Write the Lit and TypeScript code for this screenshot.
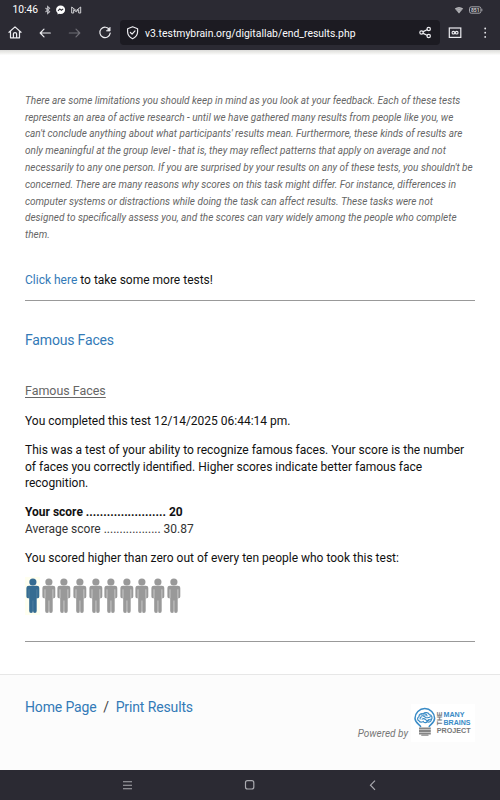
import { LitElement, html, svg, css } from "lit";
import { customElement } from "lit/decorators.js";

const NOTE = [
  "There are some limitations you should keep in mind as you look at your feedback. Each of these tests",
  "represents an area of active research - until we have gathered many results from people like you, we",
  "can't conclude anything about what participants' results mean. Furthermore, these kinds of results are",
  "only meaningful at the group level - that is, they may reflect patterns that apply on average and not",
  "necessarily to any one person. If you are surprised by your results on any of these tests, you shouldn't be",
  "concerned. There are many reasons why scores on this task might differ. For instance, differences in",
  "computer systems or distractions while doing the task can affect results. These tasks were not",
  "designed to specifically assess you, and the scores can vary widely among the people who complete",
  "them.",
];

@customElement("status-bar")
export class StatusBar extends LitElement {
  static styles = css`
    :host { display: flex; align-items: center; height: 20px; padding: 0 17px 0 12.5px; color: #fff; }
    .time { font-size: 10.3px; line-height: 20px; width: 32px; }
    svg { display: block; fill: none; }
    .spacer { flex: 1; }
    .cell { font: bold 5px/6px Roboto, sans-serif; }
  `;
  render() {
    return html`
      <span class="time">10:46</span>
      <svg width="38" height="10" viewBox="0 0 38 10">
        <path d="M.5 3 4.600 6.700 2.600 8.500v-7L4.600 3.300.5 7" stroke="#b9b9bf" stroke-width="1.1" />
        <path d="M15.600.6c-2.600 0-4.500 1.800-4.500 4.200 0 1.300.6 2.400 1.500 3.100v1.500l1.300-.7 1.700.3c2.600 0 4.500-1.800 4.500-4.200S18.200.6 15.600.6z" fill="#fff" />
        <path d="m13 5.900 1.800-2 1.600 1.300 1.800-1.300" stroke="#2b2a33" stroke-width="1.100" />
        <path d="M26.700 8V2L31.200 5.500 35.700 2V8h-2V4.700L31.200 6.800 28.700 4.700V8z" stroke="#d0d0d4" stroke-width="1" />
      </svg>
      <span class="spacer"></span>
      <svg width="10" height="8" viewBox="0 0 10 8">
        <path d="M.8 2.600Q5-.8 9.200 2.600L5 7.400z" fill="#b4b4b8" />
        <path d="M1.800 3.700Q5 1.200 8.200 3.700M3 5.200Q5 3.700 7 5.200" stroke="#77767e" stroke-width=".4" />
      </svg>
      <svg width="19" height="8" viewBox="0 0 19 8">
        <rect x="5.500" y=".8" width="11.400" height="6.400" rx="1.800" stroke="#b0b0b5" stroke-width=".9" />
        <path d="M17.900 2.800v2.400" stroke="#b0b0b5" stroke-width=".8" />
        <text class="cell" x="6.900" y="5.900" fill="#c4c4c8" textLength="8.600">851</text>
      </svg>
    `;
  }
}

@customElement("browser-bar")
export class BrowserBar extends LitElement {
  static styles = css`
    :host { display: flex; height: 30px; color: #fbfbfe; }
    svg { display: block; fill: none; stroke: #ececf0; stroke-width: 1.2; stroke-linecap: round; stroke-linejoin: round; }
    .nav { width: 120px; flex: none; }
    .field { flex: 1; display: flex; height: 25px; background: #1c1b22; border-radius: 4px; }
    .url { font-size: 10.4px; line-height: 27px; flex: 1; white-space: nowrap; }
    .tools { width: 60px; flex: none; }
    .dim { stroke: #6f6e76; }
    .dot { fill: #ececf0; stroke: none; }
  `;
  render() {
    return html`
      <svg class="nav" width="120" height="30" viewBox="0 20 120 30">
        <path d="M9 32.300 15 26.900 21 32.300M10.500 31.200V37.800H19.500V31.200M13.400 37.500V33.800Q13.400 32.700 15 32.700T16.600 33.800V37.500" />
        <path d="M50.300 33H40.300M44 29.200 40.200 33 44 36.800" />
        <path class="dim" d="M69.300 33H79.800M76 29.200 79.800 33 76 36.800" />
        <path d="M109.500 29.700A5.200 5.200 0 1 0 110.200 33.200" />
        <path d="M110.100 27.600V31H106.700z" fill="#ececf0" stroke-width=".7" />
      </svg>
      <div class="field">
        <svg width="25" height="25" viewBox="120 20 25 25">
          <path d="M132.600 26.800 137.600 28.700V31.800C137.600 35 135.400 37.400 132.600 38.700 129.800 37.400 127.600 35 127.600 31.800V28.700zM130.400 32.500 132.100 34.200 135 30.900" />
        </svg>
        <span class="url">v3.testmybrain.org/digitallab/end_results.php</span>
        <svg width="25" height="25" viewBox="415 20 25 25">
          <circle cx="421.500" cy="32.500" r="1.700" /><circle cx="428.700" cy="29" r="1.700" /><circle cx="428.700" cy="36" r="1.700" />
          <path d="M423.200 31.600 427 29.700M423.200 33.400 427 35.300" />
        </svg>
      </div>
      <svg class="tools" width="60" height="30" viewBox="440 20 60 30">
        <rect x="449.300" y="28" width="11.500" height="9.400" stroke-linejoin="miter" />
        <circle cx="453.400" cy="32.700" r="1.350" stroke-width="1.1" /><circle cx="456.700" cy="32.700" r="1.350" stroke-width="1.1" />
        <circle class="dot" cx="485.200" cy="28.500" r=".9" /><circle class="dot" cx="485.200" cy="32.700" r=".9" /><circle class="dot" cx="485.200" cy="36.900" r=".9" />
      </svg>
    `;
  }
}

@customElement("people-row")
export class PeopleRow extends LitElement {
  static styles = css`
    :host { display: flex; height: 38px; }
    .person { width: 15.65px; height: 38px; flex: none; display: block; fill: #999; }
    .active { fill: #356c91; background: linear-gradient(to right, #fffff0 15.5px, transparent 15.5px); }
    .split { stroke: #ddd; stroke-width: 0.7; }
    .active .split { stroke: #7ba0b4; stroke-width: 0.4; }
  `;
  render() {
    return Array.from({ length: 10 }, (_, i) => html`
      <svg class="person ${i === 0 ? "active" : ""}" viewBox="0 0 15.65 38">
        <circle cx="7.900" cy="5" r="3.600" />
        <path d="M4 8.800H11.800Q14.300 8.800 14.300 11.300V19.500Q14.300 21.200 12.900 21.200H11.700V34Q11.700 36 9.900 36 8 36 8 34 8 36 6.100 36 4.200 36 4.200 34V21.200H2.900Q1.400 21.200 1.400 19.500V11.300Q1.400 8.800 4 8.800z" />
        <path class="split" d="M4 12.300V21M11.900 12.300V21M7.950 23.500V35.500" />
      </svg>
    `);
  }
}

@customElement("brains-logo")
export class BrainsLogo extends LitElement {
  static styles = css`
    :host { display: block; width: 64px; height: 38px; background: #fff; }
    svg { display: block; fill: none; stroke-linecap: round; stroke-linejoin: round; }
    text { font: bold 7.8px "Liberation Sans", sans-serif; }
    .blue { stroke: #398bc6; }
    .grey { stroke: #858585; }
    .tblue { fill: #398bc6; }
    .tgrey { fill: #777; }
    .the { font-size: 6.6px; }
  `;
  render() {
    return html`<svg width="64" height="38" viewBox="0 0 64 38">
      <path class="blue" stroke-width="1.500" d="M9.600 22.500C8.900 20.700 4 19 4 14.200A9.800 9.600 0 0 1 23.600 14.200C23.600 19 18.900 20.700 18.200 22.500" />
      <path class="blue" stroke-width="1.200" d="M8 16.800C6 16 6.300 13.300 7.900 12.700 7.900 10.200 10.400 8.900 12.200 9.800 14 7.800 17.600 8.500 18.400 10.700 20.900 11.100 21.700 13.700 20.400 15.600 20.100 17.600 18 18.700 16.300 17.700 15.200 19.200 12.800 19 12.300 17.400 10.900 18.200 8.900 18.100 8 16.800z" />
      <path class="blue" stroke-width="1.100" d="M9.200 15Q8.700 12.900 11 12.700M10 10.900Q12.100 10.600 12.700 12.400M12.600 10Q15.600 9.400 16 11.900M14 11.500Q13 14.100 16.300 13.700T19.300 12.500M11.100 15.100Q12.800 13.900 14.500 15.700T17.700 15.600M16 17.400 19.400 15.200" />
      <path class="grey" stroke-width="2" stroke-linecap="butt" d="M8 24.400H19.800M8 27H19.800M8 29.600H19.800" />
      <path class="grey" stroke-width="1.200" d="M10.800 31.200H17" />
      ${svg`<text class="tgrey the" transform="translate(30.900 21.200) rotate(-90)" textLength="13.600" lengthAdjust="spacingAndGlyphs">THE</text>`}
      <text class="tblue" x="32.500" y="12.600" textLength="21" lengthAdjust="spacingAndGlyphs">MANY</text>
      <text class="tblue" x="32.500" y="20.800" textLength="27" lengthAdjust="spacingAndGlyphs">BRAINS</text>
      <text class="tgrey" x="25.700" y="29" textLength="34" lengthAdjust="spacingAndGlyphs">PROJECT</text>
    </svg>`;
  }
}

@customElement("app-root")
export class AppRoot extends LitElement {
  static styles = css`
    :host { display: flex; flex-direction: column; width: 500px; height: 800px; overflow: hidden; background: #fff; color: #111; font-family: Roboto, sans-serif; }
    .chrome { background: #2b2a33; flex: none; }
    .edge { height: 5px; flex: none; background: linear-gradient(#dcdcda, #f0f0ed 60%, #fdfdfd); }
    main { box-sizing: border-box; padding: 37.800px 25px 0; height: 619px; flex: none; font-size: 12px; line-height: 16.800px; }
    p { margin: 0; white-space: nowrap; }
    a { color: #337ab7; }
    .note { font-size: 10px; font-style: italic; color: #666; }
    .more { margin-top: 28.300px; }
    hr { margin: 11.300px 0 0; border: 0; height: 1px; background: #999; }
    .title { margin: 28.700px 0 0; font-size: 14px; line-height: 20px; letter-spacing: -0.17px; font-weight: 400; color: #337ab7; }
    .sub { margin: 32px 0 0; font-size: 12.450px; line-height: 18px; font-weight: 400; color: #666; text-decoration: underline; text-underline-offset: 2px; text-decoration-thickness: 1px; }
    .gap { margin-top: 12px; }
    .first { margin-top: 12.900px; }
    .avg { color: #333; }
    people-row { margin-top: 10.300px; }
    .end { margin-top: 26.300px; }
    footer { display: flex; justify-content: space-between; flex: 1; box-sizing: border-box; border-top: 1px solid #e7e7e7; background: #fcfcfc; padding: 22px 25px 0; }
    .links { font-size: 14px; line-height: 21px; letter-spacing: -0.13px; color: #444; white-space: pre; }
    .power { display: flex; padding-top: 7px; height: 38px; }
    .power i { font-size: 10px; line-height: 14px; color: #777; padding: 22.600px 3px 0 0; }
    .android { height: 30px; flex: none; background: #2b2a33; }
    .android svg { display: block; fill: none; stroke: #aaaab0; }
  `;
  render() {
    return html`
      <header class="chrome"><status-bar></status-bar><browser-bar></browser-bar></header>
      <div class="edge"></div>
      <main>
        <div class="note">${NOTE.map((line) => html`<p>${line}</p>`)}</div>
        <p class="more"><a>Click here</a> to take some more tests!</p>
        <hr />
        <h2 class="title">Famous Faces</h2>
        <h3 class="sub">Famous Faces</h3>
        <p class="first">You completed this test 12/14/2025 06:44:14 pm.</p>
        <p class="gap">This was a test of your ability to recognize famous faces. Your score is the number<br />of faces you correctly identified. Higher scores indicate better famous face<br />recognition.</p>
        <p class="gap"><b>Your score ....................... 20</b></p>
        <p class="avg">Average score .................. 30.87</p>
        <p class="gap">You scored higher than zero out of every ten people who took this test:</p>
        <people-row></people-row>
        <hr class="end" />
      </main>
      <footer>
        <div class="links"><a>Home Page</a>  /  <a>Print Results</a></div>
        <div class="power"><i>Powered by</i><brains-logo></brains-logo></div>
      </footer>
      <nav class="android">
        <svg width="500" height="30" viewBox="0 770 500 30">
          <path d="M123 781.700H132M123 785.200H132M123 788.700H132" stroke-width="1.1" />
          <rect x="245.500" y="780.700" width="8.300" height="8.300" rx="2" stroke-width="1.200" />
          <path d="M375 780.600 370.500 785.200 375 789.800" stroke-width="1.200" />
        </svg>
      </nav>
    `;
  }
}
